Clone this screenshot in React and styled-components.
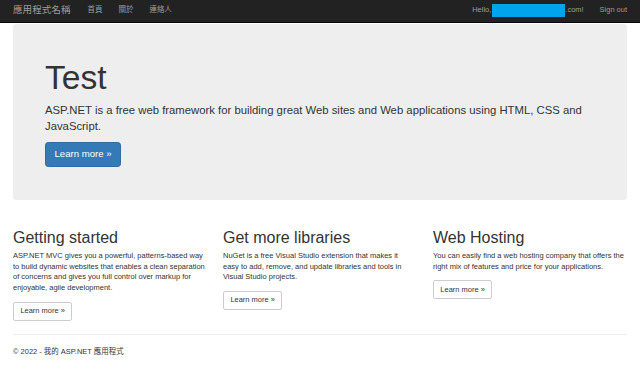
import React from 'react';
import styled, { createGlobalStyle } from 'styled-components';

const GlobalStyle = createGlobalStyle`
    html, body {
        margin: 0;
        padding: 0;
        background: #fff;
    }
    body {
        font-family: "Liberation Sans", Arial, "Noto Sans CJK TC", sans-serif;
        font-size: 7.5px;
        line-height: 10.67px;
        color: #333;
    }
`;

const features = [
    {
        title: "Getting started",
        text: "ASP.NET MVC gives you a powerful, patterns-based way to build dynamic websites that enables a clean separation of concerns and gives you full control over markup for enjoyable, agile development."
    },
    {
        title: "Get more libraries",
        text: "NuGet is a free Visual Studio extension that makes it easy to add, remove, and update libraries and tools in Visual Studio projects."
    },
    {
        title: "Web Hosting",
        text: "You can easily find a web hosting company that offers the right mix of features and price for your applications."
    }
];

const App = () => {
    return (
        <>
            <GlobalStyle />
            <Navbar>
                <Brand>應用程式名稱</Brand>
                <NavList>
                    <NavLink>首頁</NavLink>
                    <NavLink>關於</NavLink>
                    <NavLink>連絡人</NavLink>
                </NavList>
                <NavRight>
                    <NavLink>
                        Hello,<Redacted />.com!
                    </NavLink>
                    <NavLink>Sign out</NavLink>
                </NavRight>
            </Navbar>

            <Body>
                <Jumbotron>
                    <Title>Test</Title>
                    <Lead>
                        ASP.NET is a free web framework for building great Web sites and Web applications using HTML, CSS and JavaScript.
                    </Lead>
                    <BigButton>Learn more »</BigButton>
                </Jumbotron>

                <Row>
                    {features.map((el, index) => (
                        <Column key={index}>
                            <Heading>{el.title}</Heading>
                            <Text>{el.text}</Text>
                            <SmallButton>Learn more »</SmallButton>
                        </Column>
                    ))}
                </Row>

                <Rule />
                <Footer>© 2022 - 我的 ASP.NET 應用程式</Footer>
            </Body>
        </>
    );
};

const Navbar = styled.nav`
    display: flex;
    align-items: center;
    height: 20px;
    padding: 0 13px 2px 13px;
    background-color: #222;
    border-bottom: 1px solid #080808;
    color: #9d9d9d;
`;

const Brand = styled.a`
    font-size: 9.6px;
    line-height: 10.67px;
    margin-right: 9px;
    white-space: nowrap;
`;

const NavList = styled.div`
    display: flex;
    flex: 1;
`;

const NavRight = styled.div`
    display: flex;
    margin-right: -8px;
`;

const NavLink = styled.a`
    display: flex;
    align-items: center;
    padding: 0 8px;
    font-size: 7.47px;
    line-height: 10.67px;
    white-space: nowrap;
`;

const Redacted = styled.span`
    display: inline-block;
    width: 73px;
    height: 13.5px;
    margin: 1px 0 0 1px;
    background-color: #00a3ee;
`;

const Body = styled.div`
    padding: 1px 13px 0 13px;
`;

const Jumbotron = styled.div`
    padding: 36px 32px 33px 32px;
    background-color: #eee;
    border-radius: 3.2px;
`;

const Title = styled.h1`
    margin: 0 0 5px 0;
    font-size: 33.6px;
    line-height: 1.1;
    font-weight: 500;
    color: #333;
`;

const Lead = styled.p`
    margin: 0 0 8px 0;
    font-size: 11.32px;
    line-height: 16px;
    font-weight: 200;
`;

const BigButton = styled.a`
    display: inline-block;
    padding: 5.33px 8.53px;
    font-size: 9.6px;
    line-height: 1.3333;
    color: #fff;
    background-color: #337ab7;
    border: 1px solid #2e6da4;
    border-radius: 3.2px;
`;

const Row = styled.div`
    display: grid;
    grid-template-columns: repeat(3, 192.4px);
    column-gap: 17.6px;
    margin-top: 29px;
`;

const Column = styled.div`
    display: flex;
    flex-direction: column;
    align-items: flex-start;
`;

const Heading = styled.h2`
    margin: 0 0 4px 0;
    font-size: 16px;
    line-height: 1.1;
    font-weight: 500;
    color: #333;
`;

const Text = styled.p`
    margin: 0 0 8px 0;
`;

const SmallButton = styled.a`
    display: inline-block;
    padding: 3.2px 6.4px;
    font-size: 7.47px;
    line-height: 10.67px;
    color: #333;
    background-color: #fff;
    border: 1px solid #ccc;
    border-radius: 2.13px;
`;

const Rule = styled.hr`
    margin: 13px 0 12px 0;
    border: 0;
    border-top: 1px solid #eee;
`;

const Footer = styled.p`
    margin: 0;
    font-size: 7.47px;
`;

export default App;
